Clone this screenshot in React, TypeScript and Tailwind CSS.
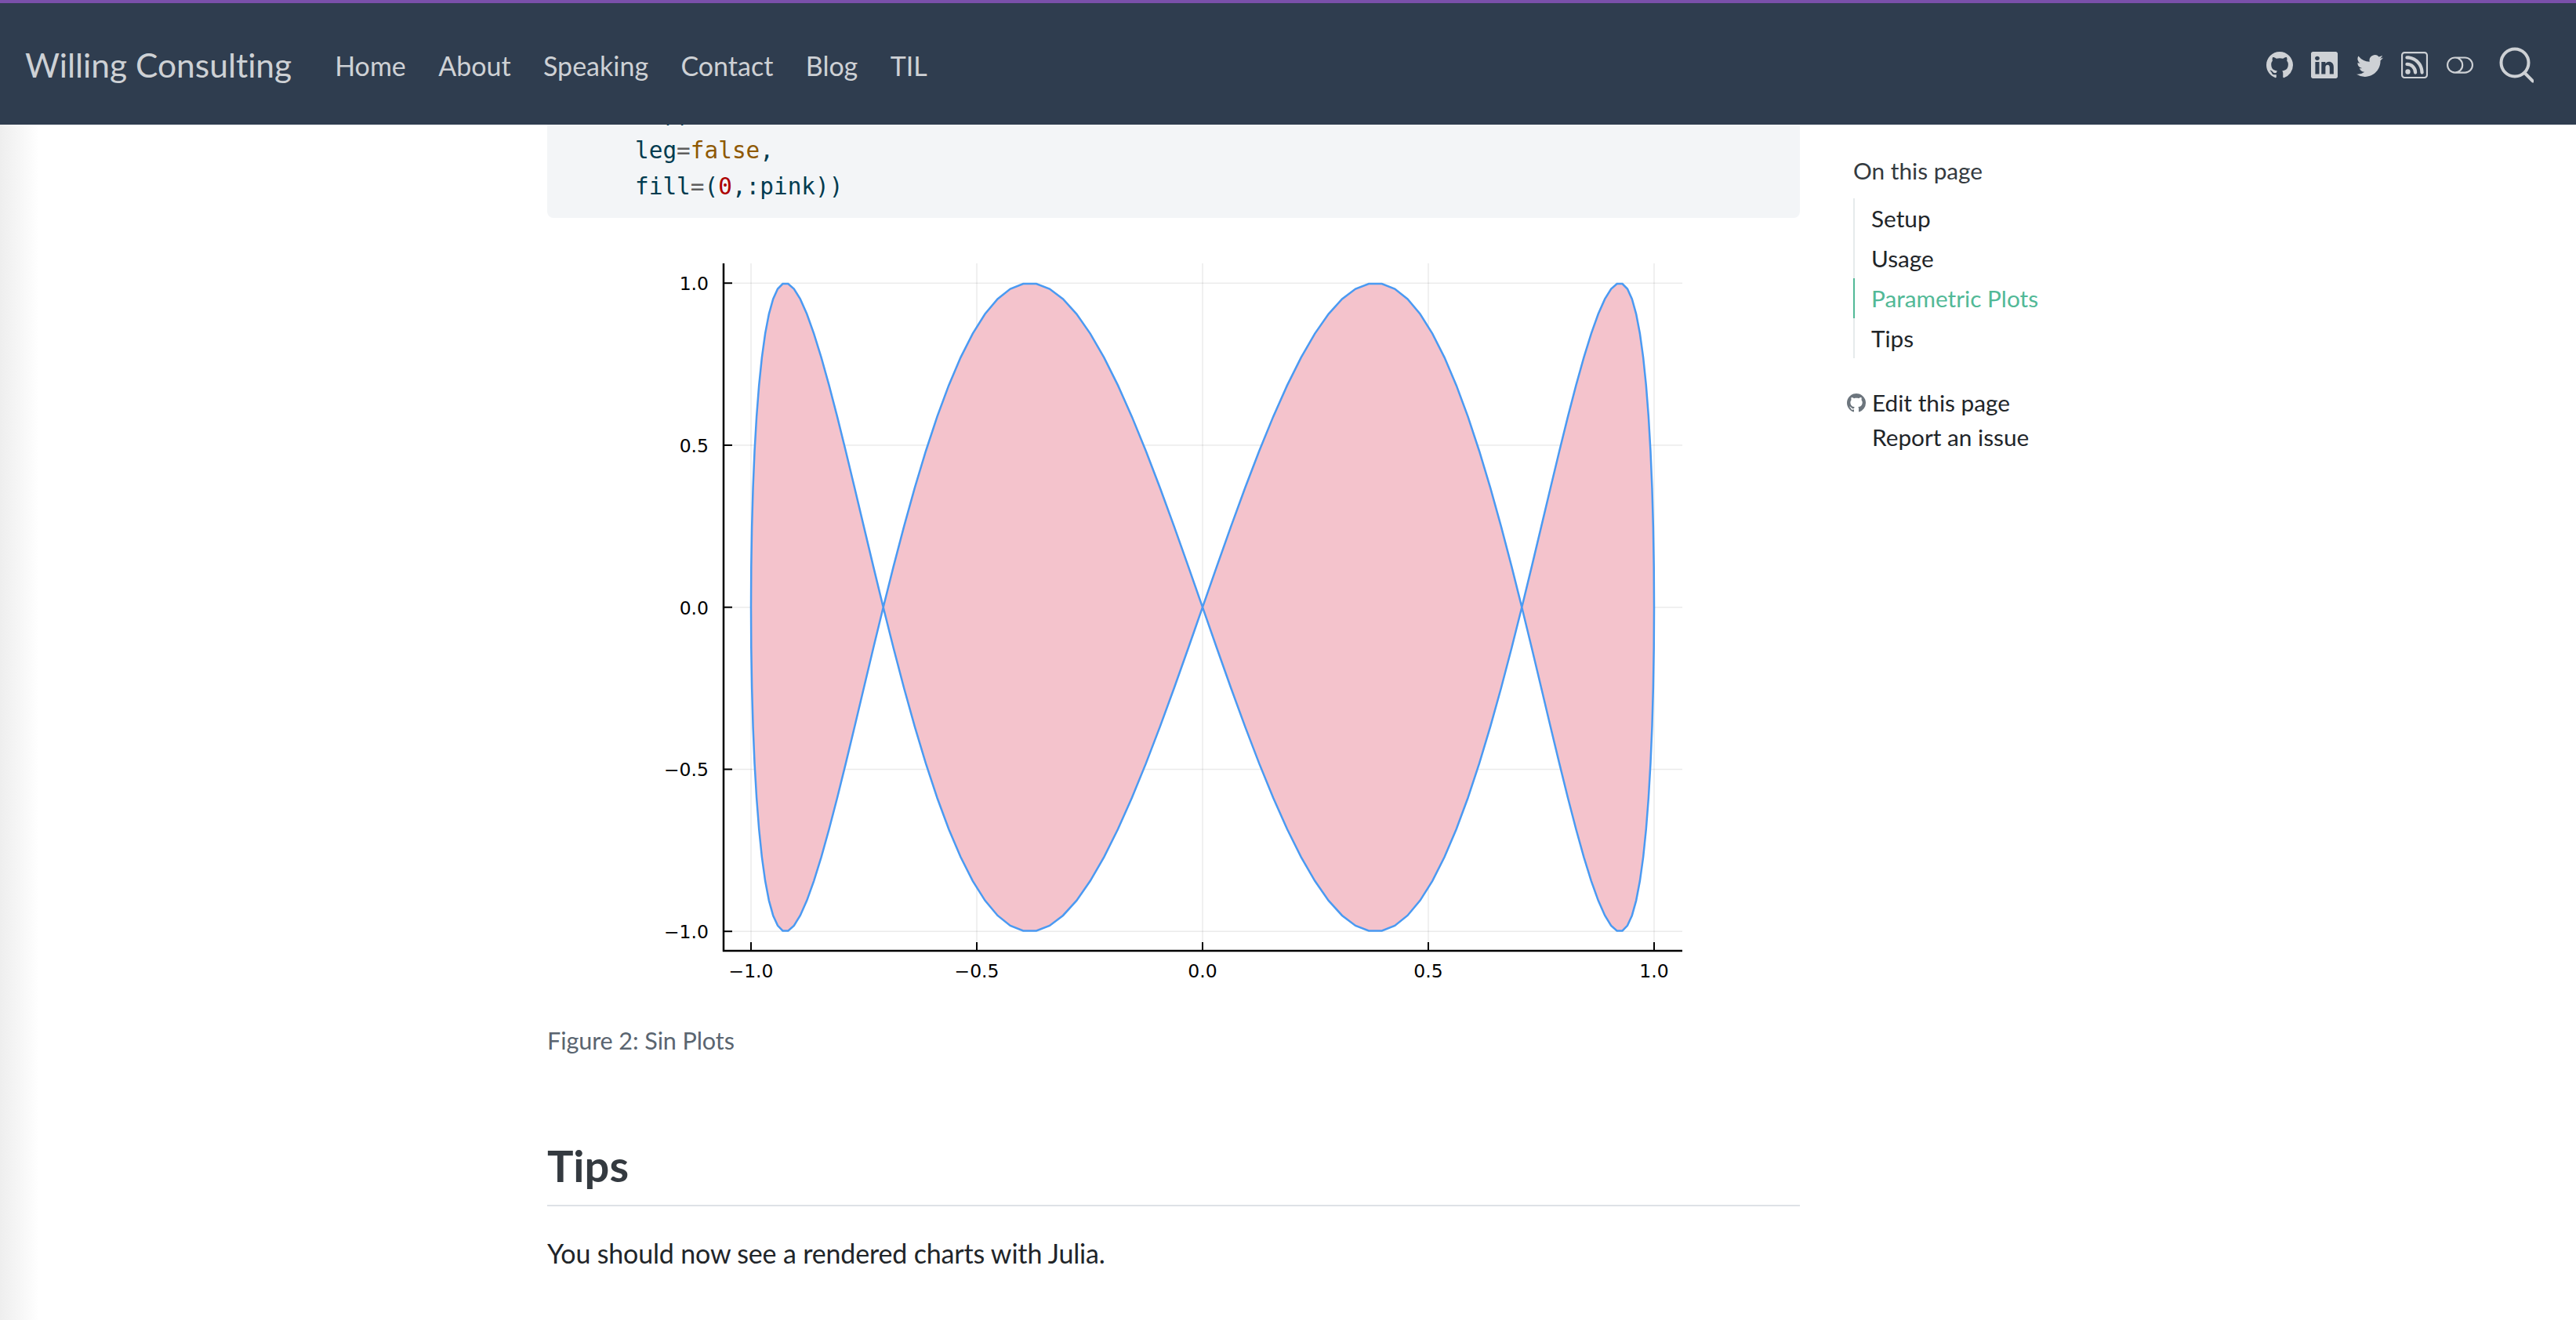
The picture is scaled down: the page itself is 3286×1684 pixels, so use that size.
import React from "react";
import { BsGithub, BsLinkedin, BsTwitter, BsRss, BsToggleOff } from "react-icons/bs";

const X = (v: number) => 1534 + v * 576;
const Y = (v: number) => 774.7 - v * 413.5;

function curve() {
  const n = 200;
  const pts: string[] = [];
  for (let i = 0; i <= n; i++) {
    const t = (i / n) * 2 * Math.PI;
    pts.push(`${X(Math.sin(t)).toFixed(2)},${Y(Math.sin(4 * t)).toFixed(2)}`);
  }
  return pts.join(" ");
}

const xTicks: [number, string][] = [
  [-1, "\u22121.0"],
  [-0.5, "\u22120.5"],
  [0, "0.0"],
  [0.5, "0.5"],
  [1, "1.0"],
];
const yTicks: [number, string][] = [
  [1, "1.0"],
  [0.5, "0.5"],
  [0, "0.0"],
  [-0.5, "\u22120.5"],
  [-1, "\u22121.0"],
];

function Plot() {
  const pts = curve();
  return (
    <svg viewBox="797 320 1400 940" className="block w-[1400px] h-[940px] ml-[99px] mt-[42px]">
      {xTicks.map(([v]) => (
        <line key={v} x1={X(v)} x2={X(v)} y1={336} y2={1213} stroke="#000" strokeOpacity={0.08} strokeWidth={1.5} />
      ))}
      {yTicks.map(([v]) => (
        <line key={v} x1={923} x2={2146} y1={Y(v)} y2={Y(v)} stroke="#000" strokeOpacity={0.08} strokeWidth={1.5} />
      ))}
      <polygon points={pts} fill="#f4c3cc" />
      <polyline points={pts} fill="none" stroke="#4a9af2" strokeWidth={2.5} />
      <line x1={923} x2={923} y1={336} y2={1214} stroke="#000" strokeWidth={2.5} />
      <line x1={922} x2={2146} y1={1213} y2={1213} stroke="#000" strokeWidth={2.5} />
      {xTicks.map(([v, s]) => (
        <g key={v}>
          <line x1={X(v)} x2={X(v)} y1={1213} y2={1202} stroke="#000" strokeWidth={2} />
          <text x={X(v)} y={1247} textAnchor="middle" fontSize={23.5} fontFamily="'DejaVu Sans', sans-serif" fill="#000">
            {s}
          </text>
        </g>
      ))}
      {yTicks.map(([v, s]) => (
        <g key={v}>
          <line x1={923} x2={934} y1={Y(v)} y2={Y(v)} stroke="#000" strokeWidth={2} />
          <text x={904} y={Y(v) + 9} textAnchor="end" fontSize={23.5} fontFamily="'DejaVu Sans', sans-serif" fill="#000">
            {s}
          </text>
        </g>
      ))}
    </svg>
  );
}

function SearchIcon() {
  return (
    <svg viewBox="0 0 44 46" className="w-[44px] h-[46px]" fill="none" stroke="#ced1d5" strokeWidth={4}>
      <circle cx={20} cy={20} r={17.5} />
      <path d="M32.5 33 L43 43.5" strokeLinecap="round" />
    </svg>
  );
}

const navItems = ["Home", "About", "Speaking", "Contact", "Blog", "TIL"];

export default function App() {
  return (
    <div className="relative h-[1684px] overflow-hidden bg-white font-['Lato','Noto_Sans',sans-serif] text-[34px] text-[#212529] [font-variant-ligatures:none]">
      <header className="relative z-10 h-[159px] border-t-4 border-[#7a50aa] bg-[#2f3d4f] flex items-center pt-[2px] pl-[32px] pr-[54px] text-[#ced1d5]">
        <div className="text-[42.5px] leading-none pt-[2px]">Willing Consulting</div>
        <nav className="flex gap-[41.4px] ml-[55px] pt-[2px]">
          {navItems.map((n) => (
            <span key={n} className="leading-none">{n}</span>
          ))}
        </nav>
        <div className="ml-auto flex items-center gap-[23.5px] text-[34px]">
          <BsGithub />
          <BsLinkedin />
          <BsTwitter />
          <BsRss />
          <BsToggleOff />
          <div className="ml-[10px]">
            <SearchIcon />
          </div>
        </div>
      </header>

      <div className="absolute left-0 top-[159px] bottom-0 w-[50px] bg-gradient-to-r from-[#eeeeee] to-white" />

      <main className="relative grid grid-cols-[698px_1598px_1fr] h-[1525px] overflow-hidden">
        <div />
        <article>
          <pre className="-mt-[36px] bg-[#f3f5f7] rounded-b-[8px] pl-[112px] pb-[17px] font-['DejaVu_Sans_Mono',monospace] text-[29.4px] leading-[46px] text-[#003b4f]">
            <div>{"  ),"}</div>
            <div>
              leg<span className="text-[#5e5e5e]">=</span>
              <span className="text-[#8f5902]">false</span>,
            </div>
            <div>
              fill<span className="text-[#5e5e5e]">=</span>(<span className="text-[#ad0000]">0</span>,:pink))
            </div>
          </pre>
          <Plot />
          <p className="mt-[47px] text-[30.6px] leading-[42px] tracking-[-0.1px] text-[#5a6570]">Figure 2: Sin Plots</p>
          <h2 className="mt-[105px] pb-[18px] border-b-2 border-[#dee2e6] text-[56px] leading-[65px] font-bold text-[#343a40]">
            Tips
          </h2>
          <p className="mt-[35px] leading-[50px] tracking-[-0.17px]">You should now see a rendered charts with Julia.</p>
        </article>
        <aside className="pl-[68px] pt-[39px] text-[29.75px] leading-[40px]">
          <div className="text-[#343a40]">On this page</div>
          <ul className="mt-[15px] w-fit pr-[60px] border-l-2 border-[#e6eaec]">
            {["Setup", "Usage", "Parametric Plots", "Tips"].map((t) => (
              <li
                key={t}
                className={
                  t === "Parametric Plots"
                    ? "-ml-[2px] border-l-2 border-[#52b997] pl-[21px] h-[51px] flex items-center text-[#52b997] whitespace-nowrap"
                    : "pl-[21px] h-[51px] flex items-center"
                }
              >
                {t}
              </li>
            ))}
          </ul>
          <div className="mt-[35px] -ml-[8px] flex items-center gap-[8px] h-[44px]">
            <BsGithub className="text-[24px] text-[#6c757d]" />
            <span>Edit this page</span>
          </div>
          <div className="pl-[24px] h-[44px] flex items-center">Report an issue</div>
        </aside>
      </main>
    </div>
  );
}
